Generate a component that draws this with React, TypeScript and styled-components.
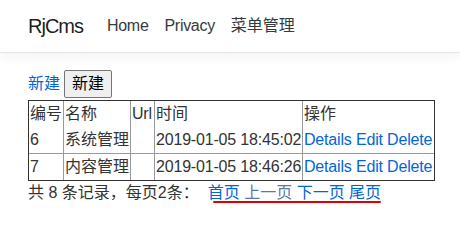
import React from "react";
import styled, { createGlobalStyle } from "styled-components";

const GlobalStyle = createGlobalStyle`
  html, body { margin: 0; padding: 0; background: #fff; }
  body {
    font-family: "Liberation Sans", "Noto Sans CJK SC", sans-serif;
    font-size: 16px;
    line-height: 1.5;
    color: #212529;
  }
  * { box-sizing: border-box; }
`;

const Navbar = styled.header`
  height: 53px;
  display: flex;
  align-items: center;
  padding-left: 28px;
  background: #fff;
  border-bottom: 1px solid #e5e5e5;
  box-shadow: 0 4px 12px rgba(0, 0, 0, 0.05);
`;

const Brand = styled.a`
  font-size: 20px;
  line-height: 30px;
  letter-spacing: -1px;
  color: rgba(0, 0, 0, 0.9);
  text-decoration: none;
  margin-right: 16px;
`;

const NavList = styled.nav`
  display: flex;
  align-items: center;
`;

const NavLink = styled.a<{ $cjk?: boolean }>`
  padding: 0 8px;
  line-height: 24px;
  color: #343a40;
  text-decoration: none;
  letter-spacing: ${(p) => (p.$cjk ? "0" : "-0.3px")};
`;

const Main = styled.main`
  padding-left: 28px;
`;

const Toolbar = styled.div`
  display: flex;
  align-items: center;
  gap: 4px;
  height: 28px;
  margin-top: 17px;
`;

const Link = styled.a<{ $muted?: boolean }>`
  color: ${(p) => (p.$muted ? "#5d7aa5" : "#0366d6")};
  text-decoration: none;
`;

const Button = styled.button`
  font: inherit;
  line-height: 24px;
  height: 28px;
  padding: 1px 7px;
  color: #000;
  background: #efefef;
  border: 1px solid #767676;
  border-radius: 2px;
`;

const Table = styled.table`
  margin-top: 2px;
  width: 407px;
  table-layout: fixed;
  border-collapse: separate;
  border-spacing: 0;
  border: 1px solid #333;
  color: #333;
`;

const Col = styled.col<{ $w: number }>`
  width: ${(p) => p.$w}px;
`;

const Cell = styled.td<{ $latin?: boolean }>`
  padding: 1px;
  line-height: 24px;
  text-align: left;
  font-weight: normal;
  white-space: nowrap;
  overflow: visible;
  letter-spacing: ${(p) => (p.$latin ? "-0.18px" : "0")};
  border-right: 1px solid #9a9a9a;
  border-bottom: 1px solid #9a9a9a;
  &:last-child { border-right: none; }
  tr:last-child > & { border-bottom: none; }
`;

const HeadCell = styled(Cell).attrs({ as: "th" })``;

const Footer = styled.div`
  height: 24px;
  line-height: 24px;
  white-space: nowrap;
  color: #333;
`;

const Pager = styled.span`
  position: relative;
  display: inline-block;
  margin-left: 9px;
  height: 24px;
`;

const Underline = styled.span`
  position: absolute;
  left: 5px;
  right: 0;
  top: 20px;
  height: 2px;
  background: #e00000;
  border-radius: 1px;
`;

const columns = [
  { label: "编号", w: 35 },
  { label: "名称", w: 67 },
  { label: "Url", w: 24 },
  { label: "时间", w: 148 },
  { label: "操作", w: 131 },
];

const rows = [
  { id: "6", name: "系统管理", url: "", time: "2019-01-05 18:45:02" },
  { id: "7", name: "内容管理", url: "", time: "2019-01-05 18:46:26" },
];

export default function App() {
  return (
    <>
      <GlobalStyle />
      <Navbar>
        <Brand href="#">RjCms</Brand>
        <NavList>
          <NavLink href="#">Home</NavLink>
          <NavLink href="#">Privacy</NavLink>
          <NavLink href="#" $cjk>
            菜单管理
          </NavLink>
        </NavList>
      </Navbar>
      <Main>
        <Toolbar>
          <Link href="#">新建</Link>
          <Button type="button">新建</Button>
        </Toolbar>
        <Table>
          <colgroup>
            {columns.map((c) => (
              <Col key={c.label} $w={c.w} />
            ))}
          </colgroup>
          <thead>
            <tr>
              {columns.map((c) => (
                <HeadCell key={c.label} $latin={c.label === "Url"}>
                  {c.label}
                </HeadCell>
              ))}
            </tr>
          </thead>
          <tbody>
            {rows.map((r) => (
              <tr key={r.id}>
                <Cell $latin>{r.id}</Cell>
                <Cell>{r.name}</Cell>
                <Cell $latin>{r.url}</Cell>
                <Cell $latin>{r.time}</Cell>
                <Cell $latin>
                  <Link href="#">Details</Link> <Link href="#">Edit</Link>{" "}
                  <Link href="#">Delete</Link>
                </Cell>
              </tr>
            ))}
          </tbody>
        </Table>
        <Footer>
          共 8 条记录，每页2条：
          <Pager>
            <Link href="#">首页</Link> <Link href="#" $muted>上一页</Link>{" "}
            <Link href="#">下一页</Link> <Link href="#">尾页</Link>
            <Underline />
          </Pager>
        </Footer>
      </Main>
    </>
  );
}
